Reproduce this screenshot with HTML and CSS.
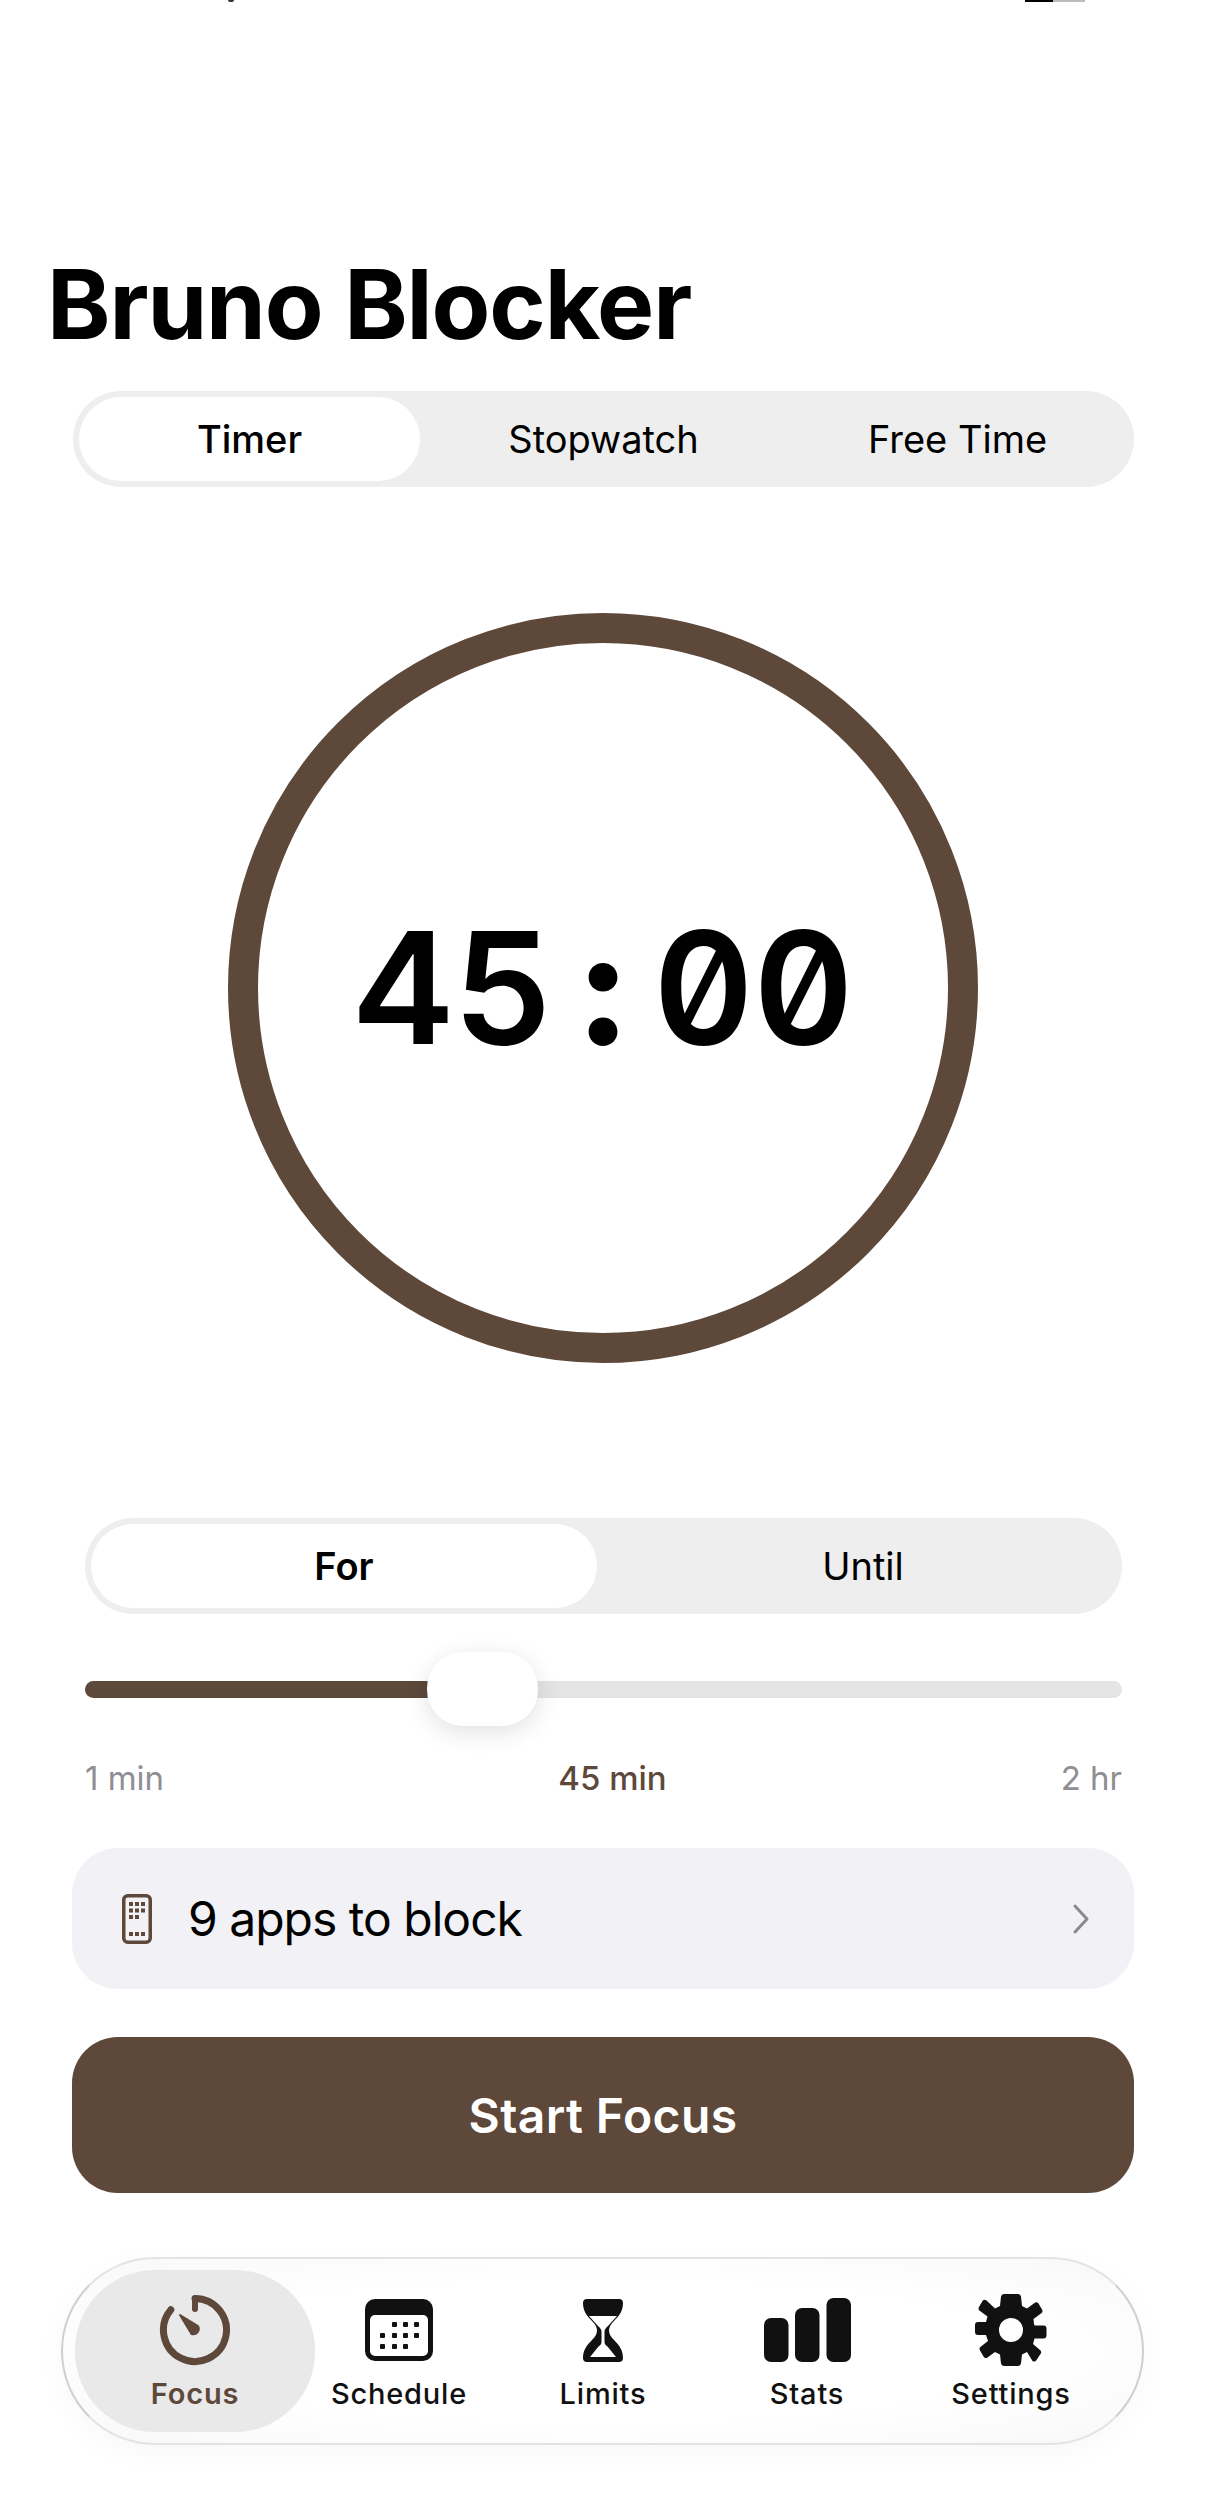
FILE: index.html
```html
<!DOCTYPE html>
<html lang="en">
<head>
<meta charset="utf-8">
<title>Bruno Blocker</title>
<link rel="stylesheet" href="styles.css">
</head>
<body>
<div class="status">
  <span class="status-dot"></span>
  <span class="status-batt"><i class="batt-on"></i><i class="batt-off"></i></span>
</div>
<h1 class="title">Bruno Blocker</h1>
<div class="seg seg-three">
  <div class="seg-item active">Timer</div>
  <div class="seg-item">Stopwatch</div>
  <div class="seg-item">Free Time</div>
</div>
<div class="dial-wrap">
  <div class="dial">
    <div class="time"><span>4</span><span>5</span><span class="colon">:</span><span>0</span><span>0</span></div>
  </div>
</div>
<div class="seg seg-two">
  <div class="seg-item active strong">For</div>
  <div class="seg-item">Until</div>
</div>
<div class="slider">
  <div class="slider-fill"></div>
  <div class="slider-thumb"></div>
  <div class="slider-rest"></div>
</div>
<div class="scale">
  <span class="scale-end">1 min</span>
  <span class="scale-now">45 min</span>
  <span class="scale-end">2 hr</span>
</div>
<div class="row">
  <svg class="row-icon" width="30" height="50" viewBox="0 0 30 50">
    <rect x="1.750" y="1.750" width="26.500" height="46.500" rx="4" fill="none" stroke="#5d483a" stroke-width="3.500"/>
    <g fill="#5d483a">
      <rect x="7" y="8" width="4" height="4"/><rect x="13" y="8" width="4" height="4"/><rect x="19" y="8" width="4" height="4"/>
      <rect x="7" y="14.500" width="4" height="4"/><rect x="13" y="14.500" width="4" height="4"/><rect x="19" y="14.500" width="4" height="4"/>
      <rect x="7" y="21" width="4" height="4"/><rect x="13" y="21" width="4" height="4"/>
      <rect x="7" y="38" width="4" height="4"/><rect x="13" y="38" width="4" height="4"/><rect x="19" y="38" width="4" height="4"/>
    </g>
  </svg>
  <span class="row-text">9 apps to block</span>
  <svg class="row-chev" width="18" height="32" viewBox="0 0 18 32"><path d="M3 3l12 13L3 29" fill="none" stroke="#8a8a8e" stroke-width="3" stroke-linecap="round" stroke-linejoin="round"/></svg>
</div>
<button class="start">Start Focus</button>
<nav class="tabs">
  <div class="tab tab-active">
    <div class="tab-icon">
    <svg width="72" height="72" viewBox="0 0 72 72">
      <path d="M36 4.500A31.500 31.500 0 1 1 11.800 15.800" fill="none" stroke="#5d483a" stroke-width="7" stroke-linecap="round"/>
      <path d="M36 4.500V15" fill="none" stroke="#5d483a" stroke-width="6" stroke-linecap="round"/>
      <path d="M21 21L39 32a5.500 5.500 0 0 1-6.500 8z" fill="#5d483a" stroke="#5d483a" stroke-width="2" stroke-linejoin="round"/>
    </svg>
    </div>
    <span>Focus</span>
  </div>
  <div class="tab">
    <div class="tab-icon">
    <svg width="68" height="62" viewBox="0 0 68 62">
      <path fill="#111" fill-rule="evenodd" d="M10 0h48a10 10 0 0 1 10 10v42a10 10 0 0 1-10 10H10A10 10 0 0 1 0 52V10A10 10 0 0 1 10 0zM10 16a5 5 0 0 0-5 5v31a5 5 0 0 0 5 5h48a5 5 0 0 0 5-5V21a5 5 0 0 0-5-5z"/>
      <g fill="#111">
        <rect x="27" y="23" width="5" height="5" rx="1"/><rect x="38" y="23" width="5" height="5" rx="1"/><rect x="49" y="23" width="5" height="5" rx="1"/>
        <rect x="15" y="34" width="5" height="5" rx="1"/><rect x="27" y="34" width="5" height="5" rx="1"/><rect x="38" y="34" width="5" height="5" rx="1"/><rect x="49" y="34" width="5" height="5" rx="1"/>
        <rect x="15" y="45" width="5" height="5" rx="1"/><rect x="27" y="45" width="5" height="5" rx="1"/><rect x="38" y="45" width="5" height="5" rx="1"/>
      </g>
    </svg>
    </div>
    <span>Schedule</span>
  </div>
  <div class="tab">
    <div class="tab-icon">
    <svg width="40" height="63" viewBox="0 0 40 63">
      <path fill="#111" fill-rule="evenodd" d="M4 0h32a4 4 0 0 1 4 4c0 8-4 13-9 18-3 3-5 6-5 9.500s2 6.500 5 9.500c5 5 9 10 9 18a4 4 0 0 1-4 4H4a4 4 0 0 1-4-4c0-8 4-13 9-18 3-3 5-6 5-9.500S12 25 9 22C4 17 0 12 0 4a4 4 0 0 1 4-4zM6 17l9 10c2 2 3.500 3 3.500 6v10c0 2-1 3-3 4.500L7 58h26l-8.500-10.500c-2-1.500-3-2.500-3-4.500V33c0-3 1.500-4 3.500-6l9-10z"/>
    </svg>
    </div>
    <span>Limits</span>
  </div>
  <div class="tab">
    <div class="tab-icon">
    <svg width="87" height="64" viewBox="0 0 87 64">
      <rect x="0" y="20" width="24.500" height="44" rx="7" fill="#111"/>
      <rect x="31" y="10" width="24.500" height="54" rx="7" fill="#111"/>
      <rect x="62.500" y="0" width="24.500" height="64" rx="7" fill="#111"/>
    </svg>
    </div>
    <span>Stats</span>
  </div>
  <div class="tab">
    <div class="tab-icon">
    <svg width="72" height="72" viewBox="0 0 72 72">
      <path fill="#111" fill-rule="evenodd" d="M29 0h14a3 3 0 0 1 3 2.500l1 9.500 5 2.500 7.500-5.500a3 3 0 0 1 4 .5l3.500 6a3 3 0 0 1-1 4l-7.500 5.500.5 5 .5 1.500h9a3 3 0 0 1 3 3v7a3 3 0 0 1-3 3h-9l-1.500 5.500 7 6a3 3 0 0 1 .5 4l-4 6a3 3 0 0 1-4 1L52 58l-5 2.500-1 9a3 3 0 0 1-3 2.500H29a3 3 0 0 1-3-2.500l-1-9-5-2.500-7.500 5.500a3 3 0 0 1-4-1l-3.500-6a3 3 0 0 1 1-4l7-5.500L11 41H3a3 3 0 0 1-3-3v-7a3 3 0 0 1 3-3h8l1.500-5.500-7.500-5.500a3 3 0 0 1-1-4l3.500-6a3 3 0 0 1 4-.5L20 14.500 25 12l1-9.500A3 3 0 0 1 29 0zM36 24a12 12 0 1 0 0 24 12 12 0 0 0 0-24z"/>
    </svg>
    </div>
    <span>Settings</span>
  </div>
</nav>
</body>
</html>
```
FILE: styles.css
```css
* { box-sizing: border-box; }
html, body { margin: 0; padding: 0; }
body {
  width: 1206px;
  height: 2506px;
  background: #fff;
  color: #000;
  font-family: Inter, "Liberation Sans", sans-serif;
  overflow: hidden;
}
.status {
  height: 3px;
  display: flex;
  justify-content: space-between;
  padding: 0 121px 0 228px;
  overflow: hidden;
}
.status-dot { width: 6px; height: 2px; background: #333; border-radius: 0 0 3px 3px; }
.status-batt { display: flex; width: 60px; height: 2px; }
.batt-on { width: 28px; background: #000; }
.batt-off { flex: 1; background: #bbb; }
.title {
  margin: 243px 0 0 47px;
  font-size: 96px;
  line-height: 116px;
  font-weight: 700;
  letter-spacing: -1.100px;
}
.seg {
  display: flex;
  gap: 13px;
  height: 96px;
  padding: 6px;
  background: #eee;
  border-radius: 48px;
}
.seg-three { margin: 29px 72px 0 73px; }
.seg-two { margin: 0 84px 0 85px; }
.seg-item {
  flex: 1;
  display: flex;
  align-items: center;
  justify-content: center;
  font-size: 38px;
  font-weight: 400;
  border-radius: 42px;
}
.seg-item.active { background: #fff; font-weight: 500; }
.seg-item.strong { font-weight: 600; }
.dial-wrap {
  display: flex;
  justify-content: center;
  margin: 126px 0 155px;
}
.dial {
  width: 750px;
  height: 750px;
  border: 30px solid #5d483a;
  border-radius: 50%;
  display: flex;
  align-items: center;
  justify-content: center;
}
.time {
  display: flex;
  font-size: 156px;
  line-height: 1;
  font-weight: 600;
  font-feature-settings: "tnum" 1, "zero" 1;
}
.time span { width: 100px; text-align: center; }
.time .colon { font-weight: 800; }
.slider {
  display: flex;
  align-items: center;
  height: 74px;
  margin: 38px 84px 0 85px;
}
.slider-fill {
  width: 350px;
  height: 17px;
  background: #5d483a;
  border-radius: 9px;
  margin-right: -8px;
}
.slider-thumb {
  width: 111px;
  height: 74px;
  background: #fff;
  border-radius: 36px;
  box-shadow: 0 6px 24px rgba(0,0,0,.12);
  position: relative;
}
.slider-rest {
  flex: 1;
  height: 17px;
  background: #e4e4e4;
  border-radius: 9px;
  margin-left: -8px;
}
.scale {
  display: grid;
  grid-template-columns: 1fr auto 1fr;
  margin: 32px 84px 0 85px;
  font-size: 33px;
  line-height: 40px;
}
.scale-end { color: #8e8e93; }
.scale-end:last-child { text-align: right; }
.scale-now { color: #5d483a; font-weight: 500; padding-left: 18px; }
.row {
  display: flex;
  align-items: center;
  height: 141px;
  margin: 50px 72px 0;
  padding: 0 44px 0 50px;
  background: #f1f1f6;
  border-radius: 46px;
}
.row-text { margin-left: 36px; font-size: 48px; letter-spacing: -1px; flex: 1; }
.start {
  display: block;
  width: 1062px;
  height: 156px;
  margin: 48px 72px 0;
  border: 0;
  border-radius: 46px;
  background: #5d483a;
  color: #fff;
  font-family: inherit;
  font-size: 48px;
  font-weight: 600;
  letter-spacing: .4px;
}
.tabs {
  display: grid;
  grid-template-columns: repeat(5, 204px);
  width: 1083px;
  height: 188px;
  margin: 64px 0 0 61px;
  padding: 11px 30px;
  border: 2px solid #e3e3e3;
  border-left-color: #cfcfcf;
  border-right-color: #cfcfcf;
  border-radius: 94px;
  background: radial-gradient(ellipse at center, #fff 55%, #f8f8fa 100%);
  box-shadow: 0 8px 30px rgba(0,0,0,.03);
}
.tab {
  display: flex;
  flex-direction: column;
  align-items: center;
  justify-content: flex-end;
  color: #111;
  font-size: 29px;
  line-height: 36px;
  font-weight: 500;
  letter-spacing: .8px;
  padding-bottom: 20px;
}
.tab-icon { height: 72px; display: flex; align-items: center; }
.tab span { margin-top: 10px; }
.tab-active {
  margin: 0 -18px;
  background: #e9e9ea;
  border-radius: 80px;
  color: #5d483a;
  font-weight: 600;
}
```
